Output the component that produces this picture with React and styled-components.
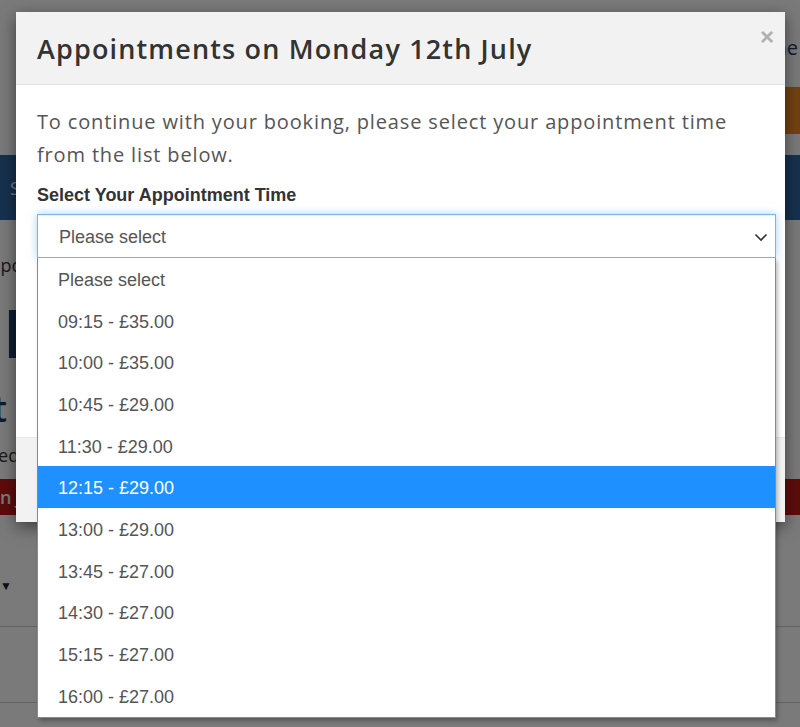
import React from 'react'
import styled, { createGlobalStyle } from 'styled-components'

const GlobalStyle = createGlobalStyle`
  html, body {
    margin: 0;
    padding: 0;
    background: #fff;
    overflow: hidden;
  }
  body {
    font-family: "Liberation Sans", Arial, sans-serif;
  }
`

const Page = styled.div`
  width: 800px;
  height: 727px;
  overflow: hidden;
  position: relative;
  background: #fff;
`

const Header = styled.div`
  height: 155px;
  display: flex;
  justify-content: flex-end;
`

const HeaderSide = styled.div`
  display: flex;
  flex-direction: column;
  align-items: flex-end;
  padding-top: 34px;
  gap: 26px;
`

const HeaderLink = styled.div`
  font-family: "Open Sans", sans-serif;
  font-size: 20px;
  color: #1d3d66;
  margin-right: 2px;
`

const OrangeButton = styled.div`
  width: 40px;
  height: 47px;
  background: #f08a24;
  margin-right: -20px;
`

const NavBar = styled.div`
  height: 65px;
  background: #2f66a3;
  display: flex;
  align-items: center;
  padding-left: 10px;
  color: #fff;
  font-family: "Open Sans", sans-serif;
  font-size: 18px;
`

const Crumb = styled.div`
  margin-top: 33px;
  font-family: "Open Sans", sans-serif;
  font-size: 18px;
  color: #333;
  margin-left: -22px;
`

const BigTitle = styled.div`
  margin-top: 19px;
  font-family: "Open Sans", sans-serif;
  font-weight: 700;
  font-size: 66px;
  line-height: 72px;
  color: #1d3d66;
  margin-left: 3px;
`

const SubTitle = styled.div`
  margin-top: 16px;
  font-family: "Open Sans", sans-serif;
  font-weight: 600;
  font-size: 36px;
  color: #1d3d66;
  margin-left: -30px;
`

const Small = styled.div`
  margin-top: 10px;
  font-family: "Open Sans", sans-serif;
  font-size: 18px;
  color: #333;
  margin-left: -12px;
`

const RedBar = styled.div`
  margin-top: 12px;
  height: 36px;
  background: #c41a1a;
  color: #fff;
  font-family: "Open Sans", sans-serif;
  font-weight: 600;
  font-size: 18px;
  display: flex;
  align-items: center;
`

const Row = styled.div`
  height: ${props => props.tall ? '112px' : '76px'};
  border-bottom: 1px solid #ccc;
  display: flex;
  align-items: center;
  font-size: 12px;
  color: #222;
  padding-top: ${props => props.tall ? '30px' : '0'};
  box-sizing: border-box;
`

const Overlay = styled.div`
  position: absolute;
  inset: 0;
  background: rgba(0, 0, 0, 0.52);
`

const Modal = styled.div`
  margin: 12px 0 0 16px;
  width: 769px;
  background: #fff;
  box-shadow: 0 5px 15px rgba(0, 0, 0, 0.5);
  display: flex;
  flex-direction: column;
`

const ModalHeader = styled.div`
  height: 72px;
  background: #f2f2f2;
  border-bottom: 1px solid #e3e3e3;
  display: flex;
  align-items: center;
  justify-content: space-between;
  padding: 0 11px 0 21px;
`

const Title = styled.h2`
  margin: 0;
  font-family: "Open Sans", sans-serif;
  font-weight: 600;
  font-size: 27px;
  color: #333;
  letter-spacing: 1.15px;
`

const Close = styled.span`
  font-family: "Liberation Sans", Arial, sans-serif;
  font-weight: 700;
  font-size: 24px;
  color: #b0b0b0;
  margin-top: -22px;
`

const ModalBody = styled.div`
  height: 352px;
  box-sizing: border-box;
  padding: 20px 21px 0 21px;
`

const Intro = styled.p`
  margin: 0;
  font-family: "Open Sans", sans-serif;
  font-size: 20px;
  line-height: 33px;
  letter-spacing: 0.85px;
  color: #555;
`

const Label = styled.div`
  margin-top: 14px;
  font-family: "Liberation Sans", Arial, sans-serif;
  font-weight: 700;
  font-size: 18px;
  color: #333;
`

const SelectWrap = styled.div`
  position: relative;
  margin-top: 8px;
  width: 739px;
`

const SelectBox = styled.div`
  height: 44px;
  box-sizing: border-box;
  border: 1px solid #7fb4dd;
  box-shadow: inset 0 1px 1px rgba(0, 0, 0, 0.075), 0 0 8px rgba(102, 175, 233, 0.6);
  display: flex;
  align-items: center;
  justify-content: space-between;
  padding: 2px 7px 0 21px;
  font-size: 18px;
  color: #555;
`

const OptionList = styled.div`
  position: absolute;
  top: 44px;
  left: 0;
  width: 739px;
  box-sizing: border-box;
  background: #fff;
  border: 1px solid #8a8a8a;
  border-top: none;
  box-shadow: 2px 3px 4px rgba(0, 0, 0, 0.25);
`

const Option = styled.div`
  height: 41.7px;
  box-sizing: border-box;
  display: flex;
  align-items: center;
  padding: 3px 0 0 20px;
  font-size: 18px;
  color: ${props => props.selected ? '#fff' : '#555'};
  background: ${props => props.selected ? '#1e90ff' : 'transparent'};
`

const ModalFooter = styled.div`
  height: 84px;
  background: #f2f2f2;
  border-top: 1px solid #e8e8e8;
`

const options = [
  'Please select',
  '09:15 - £35.00',
  '10:00 - £35.00',
  '10:45 - £29.00',
  '11:30 - £29.00',
  '12:15 - £29.00',
  '13:00 - £29.00',
  '13:45 - £27.00',
  '14:30 - £27.00',
  '15:15 - £27.00',
  '16:00 - £27.00'
]

const Chevron = () => (
  <svg width="14" height="9" viewBox="0 0 14 9">
    <path d="M1.5 1.5 L7 7 L12.5 1.5" fill="none" stroke="#333" strokeWidth="1.6" />
  </svg>
)

export default function App () {
  return (
    <Page>
      <GlobalStyle />
      <Header>
        <HeaderSide>
          <HeaderLink>Home</HeaderLink>
          <OrangeButton />
        </HeaderSide>
      </Header>
      <NavBar>Services</NavBar>
      <Crumb>Appointments</Crumb>
      <BigTitle>MOT</BigTitle>
      <SubTitle>nt</SubTitle>
      <Small>eed</Small>
      <RedBar>n July</RedBar>
      <Row tall>▼</Row>
      <Row />
      <Overlay>
        <Modal>
          <ModalHeader>
            <Title>Appointments on Monday 12th July</Title>
            <Close>×</Close>
          </ModalHeader>
          <ModalBody>
            <Intro>To continue with your booking, please select your appointment time from the list below.</Intro>
            <Label>Select Your Appointment Time</Label>
            <SelectWrap>
              <SelectBox>
                <span>Please select</span>
                <Chevron />
              </SelectBox>
              <OptionList>
                {options.map((o, i) => (
                  <Option key={o} selected={i === 5}>{o}</Option>
                ))}
              </OptionList>
            </SelectWrap>
          </ModalBody>
          <ModalFooter />
        </Modal>
      </Overlay>
    </Page>
  )
}
